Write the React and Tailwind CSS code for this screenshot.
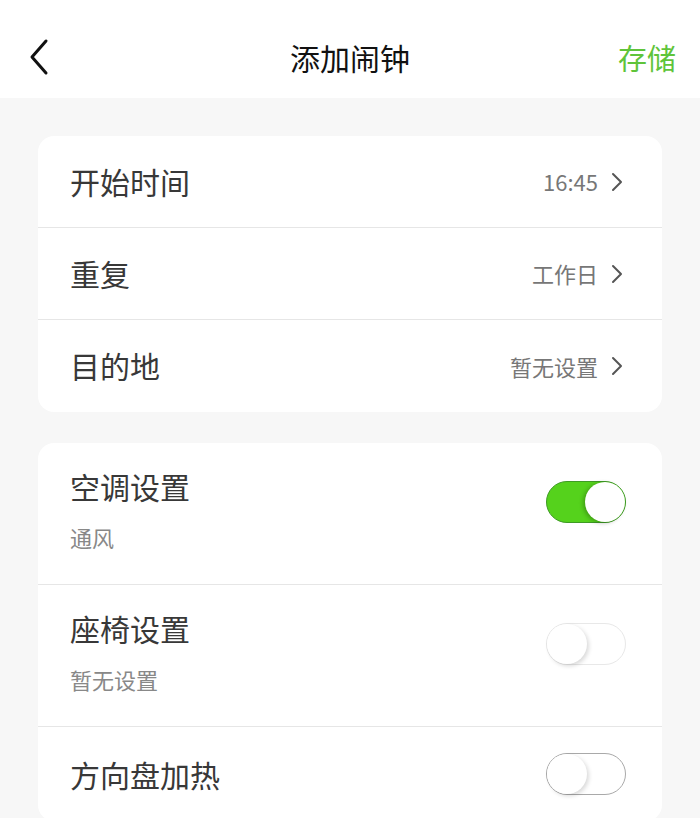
import React from "react";

const font = { fontFamily: '"Noto Sans CJK SC", "Noto Sans", sans-serif' };

function Chevron() {
  return (
    <svg width="14" height="20" viewBox="0 0 14 20" className="ml-[12px]">
      <path d="M3 2 L11 10 L3 18" fill="none" stroke="#555" strokeWidth="2" strokeLinecap="round" strokeLinejoin="round" />
    </svg>
  );
}

function Toggle({ variant }) {
  if (variant === "on") {
    return (
      <div className="relative w-[80px] h-[42px] rounded-full bg-[#55d21c] border-[1.5px] border-[#3e9b24] shrink-0">
        <div className="absolute right-0 top-1/2 -translate-y-1/2 w-[40px] h-[40px] rounded-full bg-white shadow-[-2px_1px_4px_rgba(0,0,0,0.25)]" />
      </div>
    );
  }
  const border = variant === "faint" ? "border-[#e8e8e8]" : "border-[#a9a9a9]";
  return (
    <div className={`relative w-[80px] h-[42px] rounded-full bg-white border-[1.5px] ${border} shrink-0`}>
      <div className="absolute left-0 top-1/2 -translate-y-1/2 w-[40px] h-[40px] rounded-full bg-white shadow-[2px_2px_4px_rgba(0,0,0,0.15)]" />
    </div>
  );
}

function NavRow({ label, value, last }) {
  return (
    <div className={`flex items-center h-[92px] pl-[32px] pr-[38px] ${last ? "" : "border-b border-[#e6e6e6]"}`}>
      <div className="flex-1 text-[30px] text-[#383838] leading-[40px] -mt-[2px]">{label}</div>
      <div className="flex items-center text-[22px] text-[#777]">
        <span>{value}</span>
        <Chevron />
      </div>
    </div>
  );
}

function ToggleRow({ label, sub, variant, last }) {
  return (
    <div className={`flex items-start h-[142px] pl-[32px] pr-[36px] pt-[23px] ${last ? "" : "border-b border-[#e6e6e6]"}`}>
      <div className="flex-1">
        <div className="text-[30px] text-[#383838] leading-[40px]">{label}</div>
        <div className="mt-[16px] text-[22px] text-[#888] leading-[30px]">{sub}</div>
      </div>
      <div className="mt-[15px]">
        <Toggle variant={variant} />
      </div>
    </div>
  );
}

export default function App() {
  return (
    <div className="w-[700px] h-[818px] overflow-hidden bg-[#f7f7f7]" style={font}>
      <div className="relative h-[98px] bg-white flex justify-center pt-[37px]">
        <svg width="24" height="40" viewBox="0 0 24 40" className="absolute left-[27px] top-[38px]">
          <path d="M19 3 L5 19 L19 35" fill="none" stroke="#111" strokeWidth="3" strokeLinecap="round" strokeLinejoin="round" />
        </svg>
        <div className="text-[30px] text-[#111] leading-[40px]">添加闹钟</div>
        <div className="absolute right-[24px] top-[37px] text-[29px] leading-[40px] text-[#5fc43a]">存储</div>
      </div>

      <div className="mx-[38px] mt-[38px] bg-white rounded-[16px] overflow-hidden">
        <NavRow label="开始时间" value="16:45" />
        <NavRow label="重复" value="工作日" />
        <NavRow label="目的地" value="暂无设置" last />
      </div>

      <div className="mx-[38px] mt-[31px] bg-white rounded-[16px] overflow-hidden">
        <ToggleRow label="空调设置" sub="通风" variant="on" />
        <ToggleRow label="座椅设置" sub="暂无设置" variant="faint" />
        <div className="flex items-center h-[94px] pl-[32px] pr-[36px]">
          <div className="flex-1 text-[30px] text-[#383838] leading-[40px]">方向盘加热</div>
          <Toggle variant="grey" />
        </div>
      </div>
    </div>
  );
}
